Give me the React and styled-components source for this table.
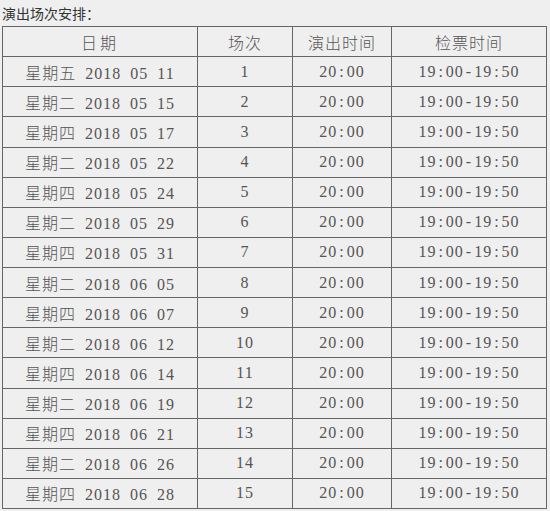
import React from 'react';
import styled, { createGlobalStyle } from 'styled-components';

const GlobalStyle = createGlobalStyle`
  html, body {
    margin: 0;
    padding: 0;
    background: #efefef;
  }
`;

const Page = styled.div`
  padding: 3px 0 0 2px;
  width: 544px;
`;

const Title = styled.div`
  font-family: "Noto Sans CJK SC", "Noto Sans", sans-serif;
  font-size: 14px;
  line-height: 20px;
  color: #333;
  height: 23px;
`;

const Table = styled.table`
  border-collapse: collapse;
  width: 544px;
  table-layout: fixed;
  font-family: "Liberation Serif", "Noto Sans CJK SC", serif;
  font-size: 16px;
  font-weight: 300;
  letter-spacing: 1px;
  word-spacing: 4px;
  color: #555;
  border: 1px solid #666;
`;

const Row = styled.tr`
  height: 30.13px;
`;

const Cell = styled.td`
  border: 1px solid #666;
  padding: 0;
  text-align: center;
  vertical-align: middle;
  white-space: nowrap;
  font-weight: 300;
`;

const Head = styled(Cell).attrs({ as: 'th' })`
  letter-spacing: ${(p) => p.$spacing || '1px'};
`;

const Punct = styled.span`
  padding: 0 2px;
`;

const widths = [195, 95, 99, 155];

const shows = [
  ['星期五', '05 11'],
  ['星期二', '05 15'],
  ['星期四', '05 17'],
  ['星期二', '05 22'],
  ['星期四', '05 24'],
  ['星期二', '05 29'],
  ['星期四', '05 31'],
  ['星期二', '06 05'],
  ['星期四', '06 07'],
  ['星期二', '06 12'],
  ['星期四', '06 14'],
  ['星期二', '06 19'],
  ['星期四', '06 21'],
  ['星期二', '06 26'],
  ['星期四', '06 28'],
];

// colons and dashes are wider in the original font
const Time = ({ text }) =>
  text.split(/([:-])/).map((part, i) =>
    part === ':' || part === '-' ? <Punct key={i}>{part}</Punct> : part
  );

export default function App() {
  return (
    <Page>
      <GlobalStyle />
      <Title>演出场次安排：</Title>
      <Table>
        <colgroup>
          {widths.map((w, i) => (
            <col key={i} style={{ width: w }} />
          ))}
        </colgroup>
        <thead>
          <Row>
            <Head $spacing="3px">日期</Head>
            <Head>场次</Head>
            <Head>演出时间</Head>
            <Head>检票时间</Head>
          </Row>
        </thead>
        <tbody>
          {shows.map(([day, date], i) => (
            <Row key={i}>
              <Cell>{day} 2018 {date}</Cell>
              <Cell>{i + 1}</Cell>
              <Cell><Time text="20:00" /></Cell>
              <Cell><Time text="19:00-19:50" /></Cell>
            </Row>
          ))}
        </tbody>
      </Table>
    </Page>
  );
}
